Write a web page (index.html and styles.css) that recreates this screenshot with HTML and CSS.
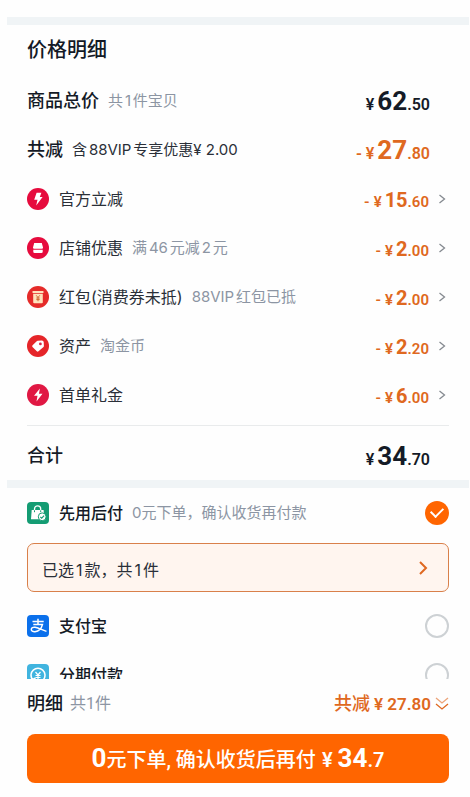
FILE: index.html
```html
<!DOCTYPE html>
<html lang="zh-CN">
<head>
<meta charset="utf-8">
<meta name="viewport" content="width=device-width, initial-scale=1">
<title>价格明细</title>
<link rel="stylesheet" href="styles.css">
</head>
<body>
<main class="sheet">
  <section class="section prices">
    <h1 class="title">价格明细</h1>
    <div class="row">
      <span class="label strong">商品总价</span>
      <span class="hint">共1件宝贝</span>
      <span class="price large"><span class="yen">¥</span><b>62</b>.50</span>
    </div>
    <div class="row">
      <span class="label strong">共减</span>
      <span class="note">含88VIP专享优惠¥ 2.00</span>
      <span class="price large off"><span class="minus">-</span><span class="yen">¥</span><b>27</b>.80</span>
    </div>
    <a class="row link" href="#official">
      <svg class="icon" viewBox="0 0 22 22" aria-hidden="true"><circle cx="11" cy="11" r="11" fill="#e60b3d"/><path d="M9.600 4.800h4.800l-1.600 4.100h2.800L9.200 17.400l1.300-5.600H7.200z" fill="#fff"/></svg>
      <span class="label">官方立减</span>
      <span class="price off"><span class="minus">-</span><span class="yen">¥</span><b>15</b>.60</span>
      <svg class="arrow" viewBox="0 0 8 10" aria-hidden="true"><path d="M1.500 1l5 4-5 4"/></svg>
    </a>
    <a class="row link" href="#shop">
      <svg class="icon" viewBox="0 0 22 22" aria-hidden="true"><circle cx="11" cy="11" r="11" fill="#e60b3d"/><path d="M7.200 6h7.600l1.200 4.400c0 1-.7 1.300-1.400 1.300H7.400C6.700 11.700 6 11.400 6 10.400z" fill="#fff"/><path d="M6.300 12.800h9.400v1.900a1.300 1.300 0 0 1-1.300 1.300H7.600a1.300 1.300 0 0 1-1.300-1.300z" fill="#fff"/></svg>
      <span class="label">店铺优惠</span>
      <span class="hint">满46元减2元</span>
      <span class="price off"><span class="minus">-</span><span class="yen">¥</span><b>2</b>.00</span>
      <svg class="arrow" viewBox="0 0 8 10" aria-hidden="true"><path d="M1.500 1l5 4-5 4"/></svg>
    </a>
    <a class="row link" href="#redpacket">
      <svg class="icon" viewBox="0 0 22 22" aria-hidden="true"><circle cx="11" cy="11" r="11" fill="#e52b29"/><rect x="5.500" y="5" width="11" height="2" rx=".6" fill="#ffe3bd"/><path d="M6.200 7.700h9.600v8.600a1 1 0 0 1-1 1H7.200a1 1 0 0 1-1-1z" fill="#ffe3bd"/><path d="M9.200 9.300L11 11.500l1.800-2.200M11 11.500v3.700M9.300 12h3.400M9.300 13.600h3.400" fill="none" stroke="#c9632c" stroke-width=".9"/></svg>
      <span class="label">红包(消费券未抵)</span>
      <span class="hint">88VIP红包已抵</span>
      <span class="price off"><span class="minus">-</span><span class="yen">¥</span><b>2</b>.00</span>
      <svg class="arrow" viewBox="0 0 8 10" aria-hidden="true"><path d="M1.500 1l5 4-5 4"/></svg>
    </a>
    <a class="row link" href="#assets">
      <svg class="icon" viewBox="0 0 22 22" aria-hidden="true"><circle cx="11" cy="11" r="11" fill="#e52529"/><path d="M10.600 5.800l4.300-.4q1.600 0 1.800 1.600l.2 4q0 .6-.4 1l-5 4.300q-.9.700-1.700-.1L5.500 12q-.8-.9.100-1.700l4.100-4q.4-.4.900-.5z" fill="#fff"/><circle cx="13.400" cy="8.900" r="1.400" fill="#d92746"/></svg>
      <span class="label">资产</span>
      <span class="hint">淘金币</span>
      <span class="price off"><span class="minus">-</span><span class="yen">¥</span><b>2</b>.20</span>
      <svg class="arrow" viewBox="0 0 8 10" aria-hidden="true"><path d="M1.500 1l5 4-5 4"/></svg>
    </a>
    <a class="row link" href="#first-order">
      <svg class="icon" viewBox="0 0 22 22" aria-hidden="true"><circle cx="11" cy="11" r="11" fill="#e01843"/><path d="M12.900 4.600L7 11.800h3.500l-1 5.600 6-7.700h-3.600z" fill="#fff"/></svg>
      <span class="label">首单礼金</span>
      <span class="price off"><span class="minus">-</span><span class="yen">¥</span><b>6</b>.00</span>
      <svg class="arrow" viewBox="0 0 8 10" aria-hidden="true"><path d="M1.500 1l5 4-5 4"/></svg>
    </a>
    <div class="row total">
      <span class="label strong">合计</span>
      <span class="price large"><span class="yen">¥</span><b>34</b>.70</span>
    </div>
  </section>

  <section class="section payments">
    <label class="method">
      <svg class="icon" viewBox="0 0 22 22" aria-hidden="true"><rect width="22" height="22" rx="4" fill="#149c73"/><path d="M4.700 8h11.900l.7 9.200H4z" fill="#fff"/><path d="M7.500 8V7a3.100 3.100 0 0 1 6.200 0v1" fill="none" stroke="#fff" stroke-width="1.300"/><path d="M7.500 8.300v1.900M13.700 8.300v1.900" stroke="#149c73" stroke-width="1"/><circle cx="15.200" cy="14.800" r="3.900" fill="#fff" stroke="#149c73"/><path d="M13.300 14.800l1.400 1.400 2.400-2.600" fill="none" stroke="#149c73" stroke-width="1.200"/></svg>
      <span class="label medium">先用后付</span>
      <span class="hint">0元下单，确认收货再付款</span>
      <input class="radio" type="radio" name="pay" checked>
    </label>
    <button class="selected" type="button">
      <span>已选1款，共1件</span>
      <svg class="selected-arrow" viewBox="0 0 10 14" aria-hidden="true"><path d="M2 1l6 6-6 6"/></svg>
    </button>
    <label class="method">
      <svg class="icon" viewBox="0 0 22 22" aria-hidden="true"><rect width="22" height="22" rx="4" fill="#0b70eb"/><path d="M5.500 6.400h11.200M11 3.800v5.400M6.300 9.400h9.200c-.8 3.300-3.300 6.900-7.500 7.300-2.300.2-3.700-.9-3.700-2.300 0-1.600 1.700-2.500 3.800-2.200 3.400.5 7 2.600 11.400 4.200" fill="none" stroke="#fff" stroke-width="1.500"/></svg>
      <span class="label medium">支付宝</span>
      <input class="radio" type="radio" name="pay">
    </label>
    <label class="method">
      <svg class="icon" viewBox="0 0 22 22" aria-hidden="true"><rect width="22" height="22" rx="4" fill="#40b4df"/><path d="M5.400 15.500a7 7 0 1 1 11.200 0M4 11l1 4.800 3.600-2" fill="none" stroke="#fff" stroke-width="1.500"/><path d="M8.500 8l2.500 3 2.500-3M11 11v5M8.500 11.500h5M8.500 13.500h5" fill="none" stroke="#fff" stroke-width="1.200"/></svg>
      <span class="label medium">分期付款</span>
      <input class="radio" type="radio" name="pay">
    </label>
  </section>
</main>

<footer class="checkout">
  <div class="summary">
    <span class="label strong">明细</span>
    <span class="count">共1件</span>
    <button class="saved" type="button">
      <span>共减</span><span class="saved-sum">¥ 27.80</span>
      <svg class="more" viewBox="0 0 14 14" aria-hidden="true"><path d="M1 1l6 5 6-5" opacity=".6"/><path d="M1 7l6 5 6-5"/></svg>
    </button>
  </div>
  <button class="submit" type="button"><b>0</b>元下单, 确认收货后再付<span class="submit-sum">¥ <b>34</b>.7</span></button>
</footer>
</body>
</html>
```
FILE: styles.css
```css
:root {
  --ink: #141a26;
  --text: #2a2f38;
  --muted: #8c95a3;
  --orange: #df6820;
  --brand: #ff6500;
  --band: #f0f4f6;
  --cjk: Inter, "Noto Sans CJK SC", sans-serif;
  --digits: Roboto, "Noto Sans CJK SC", sans-serif;
}

* {
  box-sizing: border-box;
}

body {
  display: flex;
  flex-direction: column;
  height: 100vh;
  margin: 0;
  padding: 0 1px 0 7px;
  background: #fefefe;
  color: var(--text);
  font-family: var(--cjk);
  font-size: 16px;
  line-height: 24px;
}

button {
  border: 0;
  background: none;
  color: inherit;
  font: inherit;
  cursor: pointer;
}

.sheet {
  flex: 1;
  min-height: 0;
  padding-top: 17px;
  overflow: hidden;
}

.section {
  padding: 0 20px;
  border-top: 8px solid var(--band);
}

.title {
  margin: 0;
  color: var(--ink);
  font-size: 20px;
  font-weight: 500;
  line-height: 51px;
}

.row,
.method {
  display: flex;
  align-items: center;
  gap: 9px;
  height: 49px;
  white-space: nowrap;
}

.row {
  padding-right: 19px;
}

.link {
  padding-right: 3px;
  color: inherit;
  text-decoration: none;
}

.total {
  height: 55px;
  margin-top: 6px;
  padding-top: 6px;
  border-top: 1px solid #e9ebec;
}

.icon {
  flex: none;
  width: 22px;
  height: 22px;
}

.icon + .label {
  margin-left: 1px;
}

.strong {
  color: var(--ink);
  font-size: 18px;
  font-weight: 500;
}

.medium {
  color: var(--ink);
  font-weight: 500;
}

.hint {
  color: var(--muted);
  font-size: 15px;
}

.row .hint,
.row .note,
.selected {
  text-autospace: normal;
}

.note {
  font-size: 15px;
}

.price {
  display: flex;
  align-items: baseline;
  margin-left: auto;
  padding-top: 4px;
  font-family: var(--digits);
  font-size: 15px;
  font-weight: 600;
}

.price b {
  font-size: 20px;
  font-weight: 700;
}

.large {
  color: var(--ink);
  font-size: 16px;
}

.large b {
  font-size: 26px;
}

.off {
  color: var(--orange);
}

.yen {
  margin-right: 3px;
}

.minus {
  margin-right: 4px;
}

.arrow {
  width: 8px;
  height: 10px;
  fill: none;
  stroke: #858a90;
  stroke-width: 1.3;
}

.radio {
  flex: none;
  width: 24px;
  height: 24px;
  margin: 0 0 0 auto;
  border: 2px solid #cdd1d4;
  border-radius: 50%;
  appearance: none;
}

.radio:checked {
  display: grid;
  place-items: center;
  border: 0;
  background: var(--brand);
}

.radio:checked::before {
  content: "";
  width: 10px;
  height: 6px;
  margin-bottom: 3px;
  border: solid #fff;
  border-width: 0 0 2px 2px;
  transform: rotate(-45deg);
}

.selected {
  display: flex;
  align-items: center;
  justify-content: space-between;
  width: 100%;
  height: 49px;
  margin: 6px 0 9px;
  padding: 4px 20px 0 14px;
  border: 1px solid #d9804a;
  border-radius: 7px;
  background: #fff5ef;
}

.selected-arrow {
  width: 10px;
  height: 14px;
  margin-bottom: 4px;
  fill: none;
  stroke: var(--orange);
  stroke-width: 2;
}

.checkout {
  padding: 0 20px 14px;
}

.summary {
  display: flex;
  align-items: center;
  gap: 7px;
  height: 50px;
  margin-bottom: 5px;
}

.count {
  color: var(--muted);
  font-family: var(--digits);
}

.saved {
  display: flex;
  align-items: center;
  gap: 4px;
  margin-left: auto;
  padding: 0;
  color: var(--orange);
  font-family: var(--digits);
  font-size: 18px;
  font-weight: 500;
}

.saved-sum {
  font-size: 17px;
  font-weight: 600;
}

.more {
  width: 14px;
  height: 14px;
  fill: none;
  stroke: var(--orange);
  stroke-width: 1.3;
}

.submit {
  display: flex;
  align-items: baseline;
  justify-content: center;
  width: 100%;
  height: 49px;
  padding: 0;
  border-radius: 8px;
  background: var(--brand);
  color: #fff;
  font-family: var(--digits);
  font-size: 20px;
  font-weight: 500;
  line-height: 49px;
  white-space: pre;
}

.submit b {
  font-size: 26px;
  font-weight: 700;
}

.submit-sum {
  margin-left: 6px;
  font-weight: 600;
}
```
